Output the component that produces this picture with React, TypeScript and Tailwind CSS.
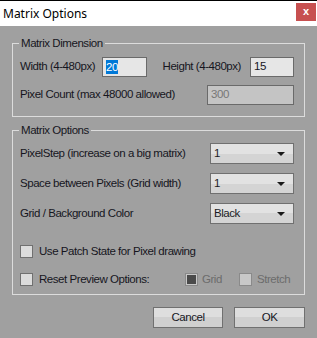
import { useState } from 'react';

const font = { fontFamily: '"Liberation Sans", Arial, sans-serif' };

function Select({ value }: { value: string }) {
  return (
    <div className="w-[84px] h-[21px] border border-[#707070] flex items-center justify-between pl-[3px] pr-[8px] text-[#1c1c24] bg-[linear-gradient(#e2e2e2_0%,#e2e2e2_50%,#d4d4d4_50%,#d4d4d4_100%)]">
      <span>{value}</span>
      <svg width="8" height="4" viewBox="0 0 8 4">
        <path d="M0 0h8L4 4z" fill="#1a1a1a" />
      </svg>
    </div>
  );
}

function Check({ checked, disabled }: { checked?: boolean; disabled?: boolean }) {
  return (
    <div className={`w-[13px] h-[13px] border flex items-center justify-center ${disabled ? 'border-[#8a8a8a] bg-[#c8c8c8]' : 'border-[#707070] bg-[#dcdcdc]'}`}>
      {checked && <div className="w-[9px] h-[9px] bg-[#4a4a4a]" />}
    </div>
  );
}

export default function App() {
  const [w] = useState('20');
  return (
    <div style={font} className="w-[317px] h-[338px] bg-[#a0a0a0] border-t border-black overflow-hidden text-[11.5px] tracking-[-0.45px] text-[#16161e] whitespace-nowrap">
      {/* Title bar */}
      <div className="h-[25px] bg-white flex items-start justify-between tracking-normal">
        <span style={{ fontFamily: '"Noto Sans", "Open Sans", sans-serif' }} className="text-[12px] text-black ml-[3px] mt-[4px]">Matrix Options</span>
        <div className="w-[20px] h-[18px] bg-[#c75050] mt-[2px] mr-[1px] flex items-center justify-center text-white text-[11px] font-bold leading-none pb-[2px]">x</div>
      </div>

      {/* Matrix Dimension */}
      <div className="relative ml-[12px] mt-[17px] w-[293px] h-[74px] border border-[#dcdcdc] pt-[13px] pl-[7px] pr-[10px]">
        <span className="absolute -top-[9px] left-[6px] bg-[#a0a0a0] px-[2px]">Matrix Dimension</span>
        <div className="flex items-center h-[20px]">
          <span className="w-[82px]">Width (4-480px)</span>
          <div className="w-[45px] h-[20px] border border-[#6a6a6a] bg-[#e6e6e6] flex items-center pl-[3px]">
            <span className="bg-[#0078d7] text-white leading-[14px]">{w}</span>
          </div>
          <span className="ml-auto mr-[9px]">Height (4-480px)</span>
          <div className="w-[44px] h-[20px] border border-[#6a6a6a] bg-[#e6e6e6] flex items-center pl-[3px]">15</div>
        </div>
        <div className="flex items-center justify-between h-[20px] mt-[8px]">
          <span>Pixel Count (max 48000 allowed)</span>
          <div className="w-[87px] h-[20px] border border-[#6a6a6a] bg-[#c4c4c4] text-[#777] flex items-center pl-[3px]">300</div>
        </div>
      </div>

      {/* Matrix Options */}
      <div className="relative ml-[12px] mt-[13px] w-[293px] h-[165px] border border-[#dcdcdc] pt-[12px] pl-[7px] pr-[10px]">
        <span className="absolute -top-[9px] left-[6px] bg-[#a0a0a0] px-[2px]">Matrix Options</span>
        <div className="flex flex-col gap-[9px]">
          <div className="flex items-center justify-between">
            <span>PixelStep (increase on a big matrix)</span>
            <Select value="1" />
          </div>
          <div className="flex items-center justify-between">
            <span>Space between Pixels (Grid width)</span>
            <Select value="1" />
          </div>
          <div className="flex items-center justify-between">
            <span>Grid / Background Color</span>
            <Select value="Black" />
          </div>
        </div>
        <div className="flex items-center gap-[6px] mt-[19px]">
          <Check />
          <span>Use Patch State for Pixel drawing</span>
        </div>
        <div className="flex items-center mt-[11px]">
          <Check />
          <span className="ml-[6px] w-[146px]">Reset Preview Options:</span>
          <div className="flex items-center w-[54px]">
            <Check checked disabled />
            <span className="ml-[4px] text-[#6c6c6c]">Grid</span>
          </div>
          <Check disabled />
          <span className="ml-[5px] text-[#6c6c6c]">Stretch</span>
        </div>
      </div>

      {/* Buttons */}
      <div className="flex justify-end gap-[11px] mt-[12px] mr-[12px]">
        <button className="w-[70px] h-[21px] border border-[#707070] bg-[linear-gradient(#dedede_0%,#dedede_50%,#d0d0d0_50%,#d0d0d0_100%)]">Cancel</button>
        <button className="w-[71px] h-[21px] border border-[#707070] bg-[linear-gradient(#dedede_0%,#dedede_50%,#d0d0d0_50%,#d0d0d0_100%)]">OK</button>
      </div>
    </div>
  );
}
